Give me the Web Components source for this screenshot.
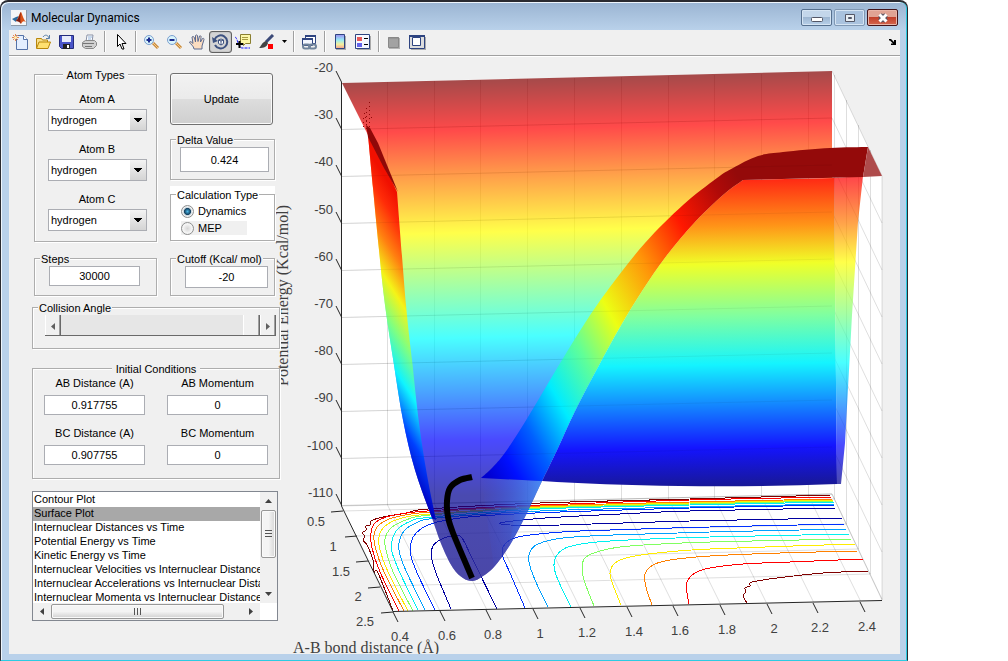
<!DOCTYPE html>
<html lang="en">
<head>
<meta charset="utf-8">
<title>Molecular Dynamics</title>
<style>
  body {
    margin: 0;
    background: #fff;
    color: #000;
    font: 11px/14px "Liberation Sans", Arial, sans-serif;
  }
  md-window { margin-right: 100px; }
  .panel {
    box-sizing: border-box;
    padding: 9px 0 24px 23px;
  }
  .pair {
    display: grid;
    grid-template-columns: 123px 105px;
    column-gap: 13px;
    padding-left: 2px;
    margin-bottom: 8px;
  }
  .pair.short { margin-bottom: 3px; }
  .stack {
    display: flex;
    flex-direction: column;
    gap: 6px;
    padding-top: 7px;
  }
  .atoms { --pad: 10px 10px 10px 13px; --label-gap: 3px; }
  .atoms md-select + md-select { margin-top: 11px; }
  .delta { --pad: 0 5px 7px 9px; --input-height: 25px; }
  .calc { --group-bg: #fff; --pad: 1px 7px 5px 10px; }
  .steps { --pad: 0 16px 9px 14px; --input-height: 20px; }
  .cutoff { --pad: 0 6px 7px 14px; --input-height: 22px; }
  .angle { --pad: 0 3px 12px 12px; margin-bottom: 11px; }
  .initial { --pad: 0 11px 13px; --label-gap: 5px; --input-height: 20px; margin-bottom: 12px; }
  .fields {
    display: grid;
    grid-template-columns: 1fr 1fr;
    gap: 11px 22px;
  }
</style>
</head>
<body>

<md-window heading="Molecular Dynamics">
  <md-toolbar slot="toolbar"></md-toolbar>

  <div class="panel">
    <div class="pair">
      <md-group class="atoms" legend="Atom Types" align="center">
        <md-select label="Atom A"></md-select>
        <md-select label="Atom B"></md-select>
        <md-select label="Atom C"></md-select>
      </md-group>
      <div class="stack">
        <md-button>Update</md-button>
        <md-group class="delta" legend="Delta Value">
          <md-field name="Delta Value" value="0.424"></md-field>
        </md-group>
        <md-group class="calc" legend="Calculation Type">
          <md-radios options="Dynamics,MEP" selected="Dynamics"></md-radios>
        </md-group>
      </div>
    </div>

    <div class="pair short">
      <md-group class="steps" legend="Steps">
        <md-field name="Steps" value="30000"></md-field>
      </md-group>
      <md-group class="cutoff" legend="Cutoff (Kcal/ mol)">
        <md-field name="Cutoff" value="-20"></md-field>
      </md-group>
    </div>

    <md-group class="angle" legend="Collision Angle">
      <md-slider value="100"></md-slider>
    </md-group>

    <md-group class="initial" legend="Initial Conditions" align="center">
      <div class="fields">
        <md-field label="AB Distance (A)" value="0.917755"></md-field>
        <md-field label="AB Momentum" value="0"></md-field>
        <md-field label="BC Distance (A)" value="0.907755"></md-field>
        <md-field label="BC Momentum" value="0"></md-field>
      </div>
    </md-group>

    <md-list selected="1"></md-list>
  </div>

  <md-plot></md-plot>
</md-window>

<script>
function attach(el, html) {
  const template = document.createElement("template");
  template.innerHTML = html;
  const root = el.attachShadow({ mode: "open" });
  root.appendChild(template.content.cloneNode(true));
  return root;
}

/**
 * Window frame
 */

class MdWindow extends HTMLElement {
  connectedCallback() {
    attach(this, `
      <style>
        :host {
          display: flex;
          flex-direction: column;
          box-sizing: border-box;
          min-height: 100vh;
          padding: 0 7px 6px 8px;
          border: 1px solid #2a2a30;
          border-top-width: 2px;
          border-bottom-color: #2ccbe2;
          border-radius: 8px 8px 0 0;
          box-shadow: inset -1px 0 #2ccbe2, inset 1px 1px #eef5fc;
          background: linear-gradient(#9ab4d2, #b9d1ea 28px) #b9d1ea;
        }
        header {
          display: flex;
          align-items: center;
          height: 28px;
          gap: 4px;
          padding: 4px 2px 0 2px;
          box-sizing: border-box;
        }
        header svg { flex: none; }
        h1 {
          flex: 1;
          margin: 0;
          font: 12px/14px Roboto, "Open Sans", sans-serif;
        }
        .controls { display: flex; gap: 2px; margin-top: -1px; }
        .controls button {
          display: flex;
          align-items: center;
          justify-content: center;
          width: 31px;
          height: 17px;
          padding: 0;
          border: 1px solid #56708f;
          border-radius: 2px;
          background: linear-gradient(#c3d6ea 45%, #9db6d1 50%, #b8d0ea);
          box-shadow: inset 0 0 0 1px #d5e4f3;
        }
        .controls .max { border-color: #8098b4; background: #a9c2de; }
        .controls .close {
          border-color: #43141a;
          background: linear-gradient(#e0a394 45%, #c2402b 50%, #d5674f);
          box-shadow: inset 0 0 0 1px #e9b5a8;
        }
        .min svg { margin-top: 4px; }
        .body {
          flex: 1;
          display: grid;
          grid-template-columns: 271px minmax(0, 1fr);
          align-items: start;
          background: #f0f0f0;
          overflow: hidden;
        }
      </style>
      <header>
        <svg width="16" height="16" viewBox="0 0 16 16">
          <path d="M0 0h16v16H0z" fill="#f4f6f8"/><path d="M0 15.500h16M15.500 0v16" stroke="#8d9aa8"/>
          <path d="M1 9l4-2 3-1-3 6z" fill="#2f6c9e"/>
          <path d="M5 11C8 8 8 3 10 2c1 1 2 7 5 10-3-2-4 0-5 2-1-2-2-3-5-3z" fill="#d95319"/>
          <path d="M5 11c3-2 4-8 5-9-1 5-1 9 0 12-1-2-3-3-5-3z" fill="#7a1d12"/>
        </svg>
        <h1></h1>
        <div class="controls">
          <button class="min" aria-label="Minimize"><svg width="12" height="6"><rect x=".5" y=".5" width="11" height="4" rx="1" fill="#fff" stroke="#535666"/></svg></button>
          <button class="max" aria-label="Maximize"><svg width="12" height="10"><path d="M1.500 1.500h9v7h-9zM4.500 4.500v1h3v-1z" fill="#e8eef4" fill-rule="evenodd" stroke="#535666"/></svg></button>
          <button class="close" aria-label="Close"><svg width="12" height="10"><path d="M3 2l6 6M9 2L3 8" stroke="#535666" stroke-width="5"/><path d="M2.500 1.500l7 7M9.500 1.500l-7 7" stroke="#fff" stroke-width="3"/></svg></button>
        </div>
      </header>
      <slot name="toolbar"></slot>
      <div class="body"><slot></slot></div>
    `).querySelector("h1").textContent = this.getAttribute("heading");
  }
}

/**
 * Figure toolbar
 */

const LENS = `<path d="M10 9l5 5" stroke="#c98a3a" stroke-width="3"/><path d="M10 9l5 5" stroke="#f3c98a"/><circle cx="6" cy="6" r="4.500" fill="#d9f4fb" stroke="#7b9fd0"/>`;

const TOOLS = [
  ["New Figure", `<path d="M4.500 1.500h7l4 4v10h-11z" fill="#e4efff" stroke="#5573a8"/><path d="M11.500 1.500v4h4" fill="#fff" stroke="#5573a8"/><path d="M3.500 0v7M0 3.500h7M1 1l5 5M6 1L1 6" stroke="#e8854a"/><circle cx="3.500" cy="3.500" r="1.500" fill="#fff0b0"/>`],
  ["Open File", `<path d="M1.500 14V4.500h5l1 1.500h5V8" fill="#f8df8a" stroke="#b8860b"/><path d="M1.500 14.500L4 8h11.500l-2.500 6.500z" fill="#ffe070" stroke="#b8860b"/><path d="M8 3c2-3 5-2 6 1M14.500 1v3.500H11" fill="none" stroke="#5a7fa8"/>`],
  ["Save Figure", `<path d="M1.500 1.500h14v13h-12l-2-2z" fill="#4a55c8" stroke="#242c7c"/><path d="M4 2h9v6H4z" fill="#e8ecfa"/><path d="M5 10h7v5H5z" fill="#222"/><path d="M9 11h2v3H9z" fill="#fff"/>`],
  ["Print Figure", `<path d="M5 8l1-7h6l-1 7" fill="#fff" stroke="#8a93a8"/><path d="M7 3h4M7 5h3" stroke="#8fb0d8"/><path d="M1.500 8.500l3-2h9l2 2v3l-3 3h-8l-3-2z" fill="#d0d0d0" stroke="#888"/><path d="M2 9.500h11M4 12.500h7" stroke="#777"/>`],
  null,
  ["Edit Plot", `<path d="M5.500 .5v12l2.500-2.500 2 5h2l-2-5.500h4z" fill="#fff" stroke="#000"/>`],
  null,
  ["Zoom In", LENS + `<path d="M3.500 6h5M6 3.500v5" stroke="#1b2c8f" stroke-width="2"/>`],
  ["Zoom Out", LENS + `<path d="M3.500 6h5" stroke="#1b2c8f" stroke-width="2"/>`],
  ["Pan", `<path d="M5 15c0-3-4-5-4.500-7 1-1 2 0 3.500 1.500L3 3c1-1 2-.5 2.500 1L6.500 8V1.500c1-1 2-.5 2 .5l.5 5.500L10.500 2c1-.5 2 0 1.500 1.500L11.500 8l2-3.500c1-.5 1.500 0 1.500 1L13 12v3z" fill="#fbdcc0" stroke="#5a6a90"/>`],
  ["Rotate 3D", `<path d="M2.500 6A6.500 6.500 0 1 1 3 11" fill="none" stroke="#3e5280" stroke-width="2"/><path d="M0 3l1 6 5-2z" fill="#3e5280"/><path d="M6.500 6l2.500-1 2.500 1v3.500L9 11l-2.500-1.500zM6.500 6L9 7l2.500-1M9 7v4" fill="#fff" stroke="#3e5280"/>`, true],
  ["Data Cursor", `<path d="M5.500 .5h10v9h-5l-2 2v-2h-3z" fill="#fdf8a8" stroke="#8a7f30"/><path d="M7 3.500h6M7 5.500h6" stroke="#a89c40"/><path d="M0 3c3 1 3 12 8 11h7" fill="none" stroke="#1414ff" stroke-dasharray="3 1"/><path d="M1 10h7M4.500 7v7" stroke="#000" stroke-width="2"/>`],
  ["Brush", `<path d="M15 1L8 8" stroke="#3c4a78" stroke-width="3"/><path d="M8 7l2 2c-1 4-4 5-9 5 2-1 2-5 7-7z" fill="#444"/><path d="M10 10h5v5h-5z" fill="#f00"/>`],
  "menu",
  null,
  ["Link Plot", `<path d="M4.500 1.500h10v8h-10z" fill="#fff" stroke="#2e4480"/><path d="M4 2h11" stroke="#2e4480" stroke-width="2"/><path d="M1.500 4.500h10v7h-10z" fill="#f4f7ff" stroke="#2e4480"/><path d="M1 5h11" stroke="#2e4480" stroke-width="2"/><rect x="2" y="10.500" width="7" height="4" rx="2" fill="none" stroke="#72859c" stroke-width="2"/><rect x="8" y="10.500" width="7" height="4" rx="2" fill="none" stroke="#72859c" stroke-width="2"/>`],
  null,
  ["Insert Colorbar", `<linearGradient id="cb" x2="0" y2="1"><stop stop-color="#9c8cf0"/><stop offset=".4" stop-color="#98ecf4"/><stop offset=".7" stop-color="#f4f09c"/><stop offset="1" stop-color="#f4a090"/></linearGradient><path d="M4 2h10v14H4z" fill="#aaa"/><path d="M3.500 .5h9v14h-9z" fill="url(#cb)" stroke="#2e4480"/>`],
  ["Insert Legend", `<path d="M2 2h14v14H2z" fill="#aaa"/><path d="M.5 .5h14v14H.5z" fill="#f6f8ff" stroke="#2e4480"/><path d="M2 3h5v4H2z" fill="#e85a5a"/><path d="M2 9h5v4H2z" fill="#6464ec"/><path d="M9 4.500h4M9 10.500h4" stroke="#000"/>`],
  null,
  ["Hide Plot Tools", `<path d="M3 4h11v11H3z" fill="#b4b4b4"/><path d="M2.500 3.500h10v10h-10z" fill="#a2a2a2" stroke="#888"/><path d="M2 4h11" stroke="#888"/>`],
  ["Show Plot Tools", `<path d="M2 3h15v13H2z" fill="#aaa"/><path d="M.5 1.500h15v13H.5z" fill="#ddd" stroke="#2e4480"/><path d="M0 2h16" stroke="#2e4480" stroke-width="2"/><path d="M3.500 3.500h8v8h-8z" fill="#fff" stroke="#2e4480"/>`],
];

class MdToolbar extends HTMLElement {
  connectedCallback() {
    const items = TOOLS.map((tool) => {
      if (!tool) return "<i></i>";
      if (tool === "menu") {
        return `<button class="menu" aria-label="Brush options"><svg width="5" height="3"><path d="M0 0h5L2.500 3z"/></svg></button>`;
      }
      const [name, art, on] = tool;
      return `<button aria-label="${name}" ${on ? 'aria-pressed="true"' : ""}>
        <svg width="17" height="16" viewBox="0 0 17 16">${art}</svg></button>`;
    }).join("");
    attach(this, `
      <style>
        :host {
          display: flex;
          align-items: center;
          height: 23px;
          padding-bottom: 2px;
          margin-bottom: 1px;
          background: #f0f0f0;
          border-bottom: 1px solid #a0a0a0;
          box-shadow: 0 1px #fff;
          position: relative;
        }
        button {
          display: flex;
          align-items: center;
          justify-content: center;
          box-sizing: border-box;
          width: 23px;
          height: 22px;
          padding: 0;
          border: 1px solid transparent;
          border-radius: 3px;
          background: none;
        }
        button[aria-pressed] { border-color: #606060; background: #d4d4d4; box-shadow: inset 0 0 1px #555; }
        .menu { width: 12px; }
        i { width: 8px; height: 21px; background: linear-gradient(90deg, #a0a0a0 50%, #fff 0) center / 2px 100% no-repeat; }
        .dock { margin-left: auto; width: 16px; }
      </style>
      ${items}
      <button class="dock" aria-label="Dock figure"><svg width="7" height="6"><path d="M0 0h2l3 3V1h2v5H2V4.500h2L1 1.500H0z"/></svg></button>
    `);
  }
}

/**
 * Form controls
 */

class MdGroup extends HTMLElement {
  connectedCallback() {
    attach(this, `
      <style>
        :host { display: block; position: relative; z-index: 1; background: var(--group-bg, none); }
        fieldset {
          min-width: 0;
          margin: 0;
          padding: 0;
          border: 1px solid #adadad;
          box-shadow: 1px 1px #fff, inset 1px 1px #fff;
          background: var(--group-bg, #f0f0f0);
        }
        legend {
          margin: 0 5px;
          padding: 2px 1px 0;
          background: var(--group-bg, #f0f0f0);
          white-space: nowrap;
        }
        :host([align=center]) legend { margin: 0 auto; padding: 2px 4px 0; }
        div { padding: var(--pad, 0); }
      </style>
      <fieldset><legend></legend><div><slot></slot></div></fieldset>
    `).querySelector("legend").textContent = this.getAttribute("legend");
  }
}

class MdButton extends HTMLElement {
  connectedCallback() {
    attach(this, `
      <style>
        :host { display: block; }
        button {
          width: 103px;
          height: 52px;
          font: inherit;
          border: 1px solid #707070;
          border-radius: 3px;
          background: linear-gradient(#f2f2f2, #ebebeb 49%, #dddddd 50%, #cfcfcf);
          box-shadow: inset 0 0 0 1px #fafafa;
        }
      </style>
      <button><slot></slot></button>
    `);
  }
}

class MdField extends HTMLElement {
  connectedCallback() {
    const label = this.getAttribute("label");
    const root = attach(this, `
      <style>
        :host { display: block; }
        label { display: block; text-align: center; white-space: nowrap; }
        span { display: block; margin-bottom: var(--label-gap, 0); }
        input {
          display: block;
          box-sizing: border-box;
          width: 100%;
          height: var(--input-height, 20px);
          padding: 0;
          border: 1px solid #abadb3;
          background: #fff;
          font: inherit;
          text-align: center;
        }
      </style>
      <label>${label ? `<span>${label}</span>` : ""}<input type="text"></label>
    `);
    const input = root.querySelector("input");
    input.value = this.getAttribute("value");
    if (!label) input.setAttribute("aria-label", this.getAttribute("name"));
  }
}

class MdSelect extends HTMLElement {
  connectedCallback() {
    attach(this, `
      <style>
        :host { display: block; }
        label { display: block; text-align: center; }
        span { display: block; margin-bottom: var(--label-gap, 0); }
        select {
          appearance: none;
          display: block;
          box-sizing: border-box;
          width: 99px;
          height: 22px;
          padding: 0 16px 0 2px;
          border: 1px solid #abadb3;
          border-radius: 0;
          color: #000;
          font: inherit;
          background:
            conic-gradient(from -45deg at 50% 100%, #000 90deg, transparent 0) right 4px top 8px / 8px 4px no-repeat,
            linear-gradient(#f4f4f4, #d4d4d4) right / 16px 100% no-repeat,
            #fff;
        }
      </style>
      <label><span>${this.getAttribute("label")}</span>
        <select>
          <option>hydrogen</option>
          <option>deuterium</option>
          <option>chlorine</option>
        </select>
      </label>
    `);
  }
}

class MdRadios extends HTMLElement {
  connectedCallback() {
    const selected = this.getAttribute("selected");
    const rows = this.getAttribute("options").split(",").map((name) => `
      <label><input type="radio" name="type" ${name === selected ? "checked" : ""}>${name}</label>`).join("");
    attach(this, `
      <style>
        :host { display: grid; gap: 2px; justify-items: start; }
        label { display: flex; align-items: center; gap: 4px; height: 16px; }
        label:last-child { height: 14px; width: 66px; background: #f0f0f0; }
        input {
          appearance: none;
          box-sizing: border-box;
          width: 13px;
          height: 13px;
          margin: 0;
          border: 1px solid #8e8f8f;
          border-radius: 50%;
          background: radial-gradient(#d6d6d6, #f6f6f6 60%);
          box-shadow: inset 0 0 0 1px #f4f4f4;
        }
        input:checked { background: radial-gradient(#4db8e8, #12405f 40%, #c9d6de 50%, #e8e8e8); }
      </style>
      ${rows}
    `);
  }
}

class MdSlider extends HTMLElement {
  connectedCallback() {
    attach(this, `
      <style>
        :host { display: flex; height: 21px; box-sizing: border-box; border-bottom: 1px solid #696969; }
        button {
          width: 16px;
          padding: 0;
          border: 0;
          border-right: 1px solid #696969;
          border-left: 1px solid #fff;
          background: #f0f0f0;
          box-shadow: inset -1px 0 #a0a0a0;
        }
        input {
          appearance: none;
          flex: 1;
          min-width: 0;
          margin: 0;
          background: #e6e6e6;
        }
        input::-webkit-slider-thumb {
          appearance: none;
          box-sizing: border-box;
          width: 17px;
          height: 20px;
          background: #f0f0f0;
          border-left: 1px solid #fff;
          border-right: 1px solid #696969;
          box-shadow: inset -1px 0 #a0a0a0;
        }
      </style>
      <button aria-label="Decrease"><svg width="4" height="7"><path d="M4 0v7L0 3.500z" fill="#606060"/></svg></button>
      <input type="range" aria-label="Collision Angle" min="0" max="100" value="${this.getAttribute("value")}">
      <button aria-label="Increase"><svg width="4" height="7"><path d="M0 0v7l4-3.500z" fill="#606060"/></svg></button>
    `);
  }
}

const PLOTS = [
  "Contour Plot",
  "Surface Plot",
  "Internuclear Distances vs Time",
  "Potential Energy vs Time",
  "Kinetic Energy vs Time",
  "Internuclear Velocities vs Internuclear Distance",
  "Internuclear Accelerations vs Internuclear Distance",
  "Internuclear Momenta vs Internuclear Distance",
];

class MdList extends HTMLElement {
  connectedCallback() {
    const selected = Number(this.getAttribute("selected"));
    attach(this, `
      <style>
        :host {
          display: grid;
          grid-template: 111px 17px / minmax(0, 1fr) 17px;
          width: 244px;
          border: 1px solid #828790;
          background: #fff;
        }
        select {
          display: block;
          width: 100%;
          height: 111px;
          margin: 0;
          padding: 1px 0 0;
          border: 0;
          border-radius: 0;
          outline: 0;
          background: #fff;
          font: inherit;
          overflow: hidden;
          scrollbar-width: none;
        }
        option {
          height: 14px;
          min-height: 0;
          padding: 0 1px;
          line-height: 14px;
          color: #000;
        }
        option:checked { background: linear-gradient(#a8a8a8, #a8a8a8); color: #000; }
        .bar { display: flex; align-items: center; justify-content: space-between; background: #f0f0f0; }
        .v { flex-direction: column; }
        .bar > svg { flex: none; margin: 5px; }
        .thumb {
          display: flex;
          align-items: center;
          justify-content: center;
          box-sizing: border-box;
          border: 1px solid #979797;
          border-radius: 2px;
          box-shadow: inset 0 0 0 1px #fafafa;
        }
        .v .thumb { width: 15px; height: 48px; margin: 0 1px auto; background: linear-gradient(90deg, #f4f4f4 50%, #d6d6d6); }
        .h .thumb { width: 173px; height: 15px; margin-right: auto; background: linear-gradient(#f4f4f4 50%, #d0d0d0); }
      </style>
      <select size="8" aria-label="Plot type">
        ${PLOTS.map((name, i) => `<option ${i === selected ? "selected" : ""}>${name}</option>`).join("")}
      </select>
      <div class="bar v">
        <svg width="7" height="8" viewBox="0 -2 7 8"><path d="M0 4h7L3.500 0z" fill="#404040"/></svg>
        <div class="thumb"><svg width="7" height="8"><path d="M0 .5h7M0 3.500h7M0 6.500h7" stroke="#555"/></svg></div>
        <svg width="7" height="8" viewBox="0 -2 7 8"><path d="M0 0h7L3.500 4z" fill="#404040"/></svg>
      </div>
      <div class="bar h">
        <svg width="8" height="7" viewBox="-2 0 8 7"><path d="M4 0v7L0 3.500z" fill="#404040"/></svg>
        <div class="thumb"><svg width="8" height="7"><path d="M.5 0v7M3.500 0v7M6.500 0v7" stroke="#555"/></svg></div>
        <svg width="8" height="7" viewBox="-2 0 8 7"><path d="M0 0v7l4-3.500z" fill="#404040"/></svg>
      </div>
    `);
  }
}

/**
 * Surface plot
 */

const JET = ["#800000", "#f00", "#ff8000", "#ff0", "#80ff80", "#0ff", "#0080ff", "#00f", "#000090"];
const JET_DEEP = ["#a00c0c", "#ff2c14", "#ff9418", "#f0ff28", "#80ffa0", "#14f4ff", "#1484ff", "#1414ff", "#181898"];

// contours on the floor, outermost first
const CONTOURS = [
  ["#800000", [[393,611],[385,590],[377,571],[374,572],[373,560],[367,545],[363,540],[365,536],[362,533],[366,530],[366,526],[370,525],[371,521],[383,517],[407,513],[428,509],[540,503],[690,499],[831,495]]],
  ["#f00", [[399,611],[380,572],[372,548],[371,533],[375,523],[390,516],[427,511],[540,505],[690,500],[832,497]]],
  ["#ff8000", [[404,611],[384,572],[376,550],[374,535],[380,524],[396,517],[430,512],[540,506],[690,502],[833,499]]],
  ["#ffec00", [[408,611],[388,572],[380,550],[379,537],[385,526],[402,518],[430,514],[540,507],[690,503],[834,500]]],
  ["#80ff60", [[413,611],[393,572],[386,550],[385,539],[391,528],[406,520],[430,515],[540,508],[690,504],[834,501]]],
  ["#00f0f0", [[418,610],[400,573],[392,552],[392,541],[397,530],[411,521],[432,517],[540,509],[690,505],[835,502]]],
  ["#00a0ff", [[425,610],[407,573],[400,555],[399,543],[404,531],[416,523],[437,518],[540,511],[690,507],[835,504]]],
  ["#0030ff", [[435,610],[418,575],[411,556],[411,543],[416,533],[428,525],[447,520],[480,516],[560,512],[690,508],[835,505]]],
  ["#0000a0", [[451,609],[436,573],[431,555],[433,546],[438,541],[447,537],[456,536],[462,538],[473,560],[497,609]]],
  ["#0000a0", [[836,508],[690,511],[620,514],[545,518],[505,522],[501,524],[510,525],[560,525],[690,521],[843,518]]],
  ["#0030ff", [[525,608],[510,573],[503,557],[503,547],[512,539],[530,535],[580,531],[710,527],[845,524]]],
  ["#00a0ff", [[548,607],[535,580],[529,562],[530,552],[538,544],[563,538],[613,535],[710,532],[847,529]]],
  ["#00f0f0", [[571,607],[558,580],[554,566],[557,555],[568,547],[597,542],[650,539],[710,537],[850,534]]],
  ["#80ff60", [[594,606],[585,583],[582,569],[585,558],[600,551],[630,546],[710,542],[852,539]]],
  ["#ffec00", [[621,605],[613,585],[610,573],[615,563],[630,557],[657,553],[710,549],[855,544]]],
  ["#ff8000", [[652,605],[646,587],[645,574],[653,565],[670,560],[710,556],[780,553],[858,551]]],
  ["#f00", [[689,604],[687,593],[687,582],[695,573],[710,568],[743,564],[790,562],[863,559]]],
  ["#800000", [[747,603],[743,596],[746,592],[745,588],[750,586],[750,583],[757,581],[777,578],[823,573],[868,571]]],
];

const RIM = [[481,478],[492,468],[504,454],[520,430],[540,397],[562,360],[585,323],[610,287],[645,243],[683,205],[717,178],[733,168],[758,156],[783,152],[830,148],[868,147]];
const LIP = [[743,180],[723,195],[695,222],[667,255],[642,291],[620,327],[598,367],[575,411],[557,450],[542,481]];
const BOWL = [[542,481],[526,515],[510,545],[494,567],[480,578],[472,581],[463,578],[453,568],[442,546],[432,518]];
const WALL_OUT = [[368,135],[373,188],[379,250],[385,305],[394,365],[403,420],[415,470],[432,518]];
const WALL_IN = [[436,520],[427,475],[419,423],[412,360],[406,305],[397,192]];

// Catmull-Rom spline through the points; lead is the first path command
function curve(points, lead = "M") {
  let d = lead + points[0].join();
  for (let i = 0; i < points.length - 1; i++) {
    const a = points[i - 1] || points[i];
    const b = points[i];
    const c = points[i + 1];
    const e = points[i + 2] || c;
    d += `C${b[0] + (c[0] - a[0]) / 6},${b[1] + (c[1] - a[1]) / 6} ${c[0] - (e[0] - b[0]) / 6},${c[1] - (e[1] - b[1]) / 6} ${c}`;
  }
  return d;
}

function gradient(id, [x1, y1, x2, y2], stops) {
  return `<linearGradient id="${id}" gradientUnits="userSpaceOnUse" x1="${x1}" y1="${y1}" x2="${x2}" y2="${y2}">
    ${stops.map(([at, color]) => `<stop offset="${at}" stop-color="${color}"/>`).join("")}</linearGradient>`;
}

const jetStops = (offsets, colors = JET) => offsets.map((at, i) => [at, colors[i]]);

class MdPlot extends HTMLElement {
  connectedCallback() {
    attach(this, `
      <style>
        :host { display: block; }
        svg { display: block; width: 100%; overflow: visible; }
        text { font: 13px "Liberation Sans", Arial, sans-serif; fill: #404040; text-anchor: middle; }
        .title { font: 16px "Liberation Serif", "Times New Roman", serif; text-anchor: start; }
        .z { text-anchor: end; }
        .grid { stroke: #000; stroke-opacity: .13; fill: none; }
        .over { stroke-opacity: .05; }
        .axis { stroke: #262626; fill: none; }
        .contours { fill: none; shape-rendering: crispEdges; }
      </style>
      <svg viewBox="280 57 620 597" role="img" aria-label="Potential energy surface">
        <defs>
          ${gradient("back", [342, 83, 354, 583], jetStops([0, .1, .2, .305, .41, .515, .62, .72, .83]))}
          ${gradient("front", [700, 140, 706, 486], jetStops([0, .12, .25, .36, .51, .65, .77, .89, 1], JET_DEEP))}
          ${gradient("strip", [700, 140, 706, 486], jetStops([0, .12, .25, .36, .51, .65, .77, .89, 1]))}
          ${gradient("ribbon", [490, 480, 808, 298], [[0, "#0000d0"], [.07, "#0010ff"], [.16, "#0060ff"], [.27, "#00ecff"], [.39, "#60ff98"], [.51, "#ecff14"], [.66, "#ff9408"], [.8, "#ff1800"], [.93, "#b00a08"], [1, "#940a0a"]])}
          ${gradient("wall", [368, 150, 249, 225], [[0, "#f01000"], [.1, "#ff2c08"], [.24, "#ff8010"], [.38, "#f4f418"], [.52, "#80ff80"], [.67, "#10f4ff"], [.84, "#0040ff"], [1, "#0000c0"]])}
          <linearGradient id="sheen" x1="0" x2="1">
            <stop stop-color="#3050ff" stop-opacity="0"/>
            <stop offset="1" stop-color="#4a9cff" stop-opacity=".8"/>
          </linearGradient>
          <linearGradient id="fade" x1="0" x2="0" y1="0" y2="1">
            <stop offset=".3" stop-color="#4a46a4" stop-opacity="0"/>
            <stop offset="1" stop-color="#4a46a4" stop-opacity=".7"/>
          </linearGradient>
        </defs>
        <path d="M341 83L832 71 882 176V600L393 612 341 506z" fill="#fff"/>
        <g class="grid">${this.grid()}</g>
        <g class="contours">
          ${CONTOURS.map(([color, points]) => `<path stroke="${color}" d="${curve(points)}"/>`).join("")}
        </g>
        ${this.surface()}
        <path class="grid over" d="${this.zLines()}"/>
        ${this.axes()}
      </svg>
    `);
  }

  zLines() {
    let d = "";
    for (let i = 1; i < 10; i++) d += `M341 ${82.5 + i * 47}L832 ${71 + i * 47}`;
    return d;
  }

  grid() {
    let d = this.zLines();
    for (let i = 1; i < 10; i++) d += `M832 ${71 + i * 47}L882 ${176 + i * 47}`;
    for (let i = 1; i < 11; i++) {
      const x = Math.round(340 + i * 46.8) + .5;
      d += `M${x} ${83 - i}V${506 - i}L${x + 52} ${611 - i}`;
    }
    [[343, 511], [357, 536], [368, 561], [380, 586]].forEach(([x, y], i) => {
      const far = [834.5, 846.5, 858.5, 870.5][i];
      d += `M${x} ${y}L${far} ${y - 12}V${75 + i * 25}`;
    });
    d += "M341 506L832 494L882 600M832 71L882 176V600";
    return `<path d="${d}"/>`;
  }

  surface() {
    const lip = curve(LIP, "L");
    return `
      <path fill="url(#back)" fill-opacity=".71" d="M342 83L832 71V178H743${lip}${curve(BOWL, "L")}${curve([...WALL_OUT].reverse(), "L")}L366 131z"/>
      <path fill="url(#sheen)" d="M481 478L542 481 526 515 510 545 494 567z"/>
      <path fill="url(#fade)" d="M432 480H520${curve(BOWL.slice(2), "L")}z"/>
      <path fill="url(#front)" d="${curve(LIP)}Q600 485 680 486Q760 487 837 484L834 178z"/>
      <path fill="url(#strip)" fill-opacity=".71" d="M834 178L863 176 858 222 852 315 845 443 841 484H837z"/>
      <path fill="url(#ribbon)" d="${curve(RIM)}L863 177 743 180${lip}z"/>
      <path fill="#ae4b4b" d="M868 147L882 176 863 177z"/>
      <path fill="url(#wall)" d="${curve(WALL_OUT)}${curve(WALL_IN, "L")}L374 142z"/>
      <path fill="#900808" d="M366 125L370 128 378 143 398 192 384 168 368 137z"/>
      <path stroke="#900808" fill="none" stroke-dasharray="1 3" shape-rendering="crispEdges" d="M369.500 102V128M363.500 118V128M371.500 117V120M366.500 108V130M364.500 113l3 12"/>
      <path fill="none" stroke="#000" stroke-width="6" d="${curve([[472,477],[460,480],[450,488],[447,501],[448,517],[453,533],[472,578]])}"/>
    `;
  }

  axes() {
    let out = `<path class="axis" d="M341.500 82V506L393 611.500 882 600.500"/>`;
    let ticks = "";
    for (let i = 0; i < 10; i++) {
      const y = 82 + i * 47;
      ticks += `M336 ${y - 11}L341.500 ${y}`;
      out += `<text class="z" x="333" y="${Math.round(72 + i * 47.2)}">${-20 - i * 10}</text>`;
    }
    [[343, 511, 316, 526], [357, 536, 333, 551], [368, 561, 341, 576], [380, 587, 358, 601], [393, 612, 365, 626]].forEach(([x, y, tx, ty], i) => {
      ticks += `M${x} ${y}l-12 1`;
      out += `<text x="${tx}" y="${ty}">${.5 + i * .5}</text>`;
    });
    for (let i = 0; i < 11; i++) {
      const x = Math.round(393 + i * 46.7);
      ticks += `M${x} ${612 - i}l5 10`;
      out += `<text x="${x + 7}" y="${641 - i}">${(4 + i * 2) / 10}</text>`;
    }
    return `${out}<path class="axis" d="${ticks}"/>
      <text class="title" transform="translate(288 386) rotate(-90)">Potential Energy (Kcal/mol)</text>
      <text class="title" x="293" y="653">A-B bond distance (Å)</text>`;
  }
}

customElements.define("md-window", MdWindow);
customElements.define("md-toolbar", MdToolbar);
customElements.define("md-group", MdGroup);
customElements.define("md-button", MdButton);
customElements.define("md-field", MdField);
customElements.define("md-select", MdSelect);
customElements.define("md-radios", MdRadios);
customElements.define("md-slider", MdSlider);
customElements.define("md-list", MdList);
customElements.define("md-plot", MdPlot);
</script>
</body>
</html>
